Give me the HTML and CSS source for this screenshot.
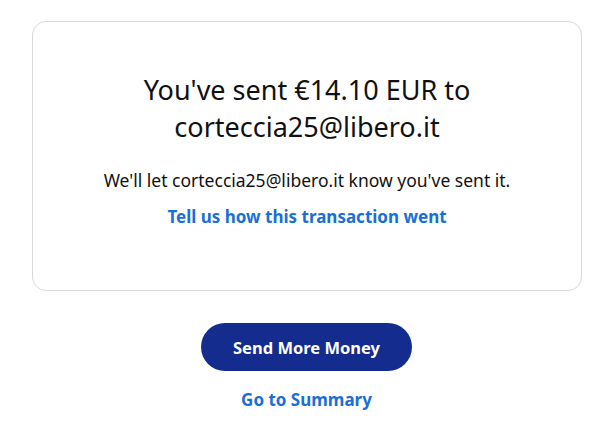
FILE: index.html
```html
<!DOCTYPE html>
<html>
<head>
<meta charset="utf-8">
<link rel="stylesheet" href="styles.css">
</head>
<body>
<main class="page">
  <section class="card">
    <h1 class="title">You've sent €14.10 EUR to corteccia25@libero.it</h1>
    <p class="note">We'll let corteccia25@libero.it know you've sent it.</p>
    <a class="link" href="#">Tell us how this transaction went</a>
  </section>
  <div class="actions">
    <button class="primary">Send More Money</button>
    <a class="link summary" href="#">Go to Summary</a>
  </div>
</main>
</body>
</html>
```
FILE: styles.css
```css
* { box-sizing: border-box; }
html, body { margin: 0; padding: 0; background: #fff; }
body { font-family: "Noto Sans", sans-serif; color: #111; }
.page { padding: 21px 23px 0 32px; width: 604px; }
.card {
  width: 550px;
  height: 270px;
  border: 1px solid #d9d9d9;
  border-radius: 14px;
  display: flex;
  flex-direction: column;
  align-items: center;
  padding: 49px 40px 0;
}
.title {
  margin: 0;
  font-size: 27px;
  font-weight: 400;
  line-height: 37px;
  text-align: center;
  width: 360px;
}
.note { margin: 24px 0 0; font-size: 17.5px; line-height: 22px; }
.link {
  color: #1a6fd6;
  font-weight: 700;
  text-decoration: none;
  font-size: 17px;
  line-height: 22px;
}
.card .link { margin-top: 15px; }
.actions { display: flex; flex-direction: column; align-items: center; padding-top: 32px; }
.primary {
  width: 211px; height: 48px;
  border: none; border-radius: 24px;
  background: #142c8e; color: #fff;
  font-family: inherit; font-weight: 700; font-size: 16.5px;
}
.summary { margin-top: 18px; font-size: 17px; }
```
